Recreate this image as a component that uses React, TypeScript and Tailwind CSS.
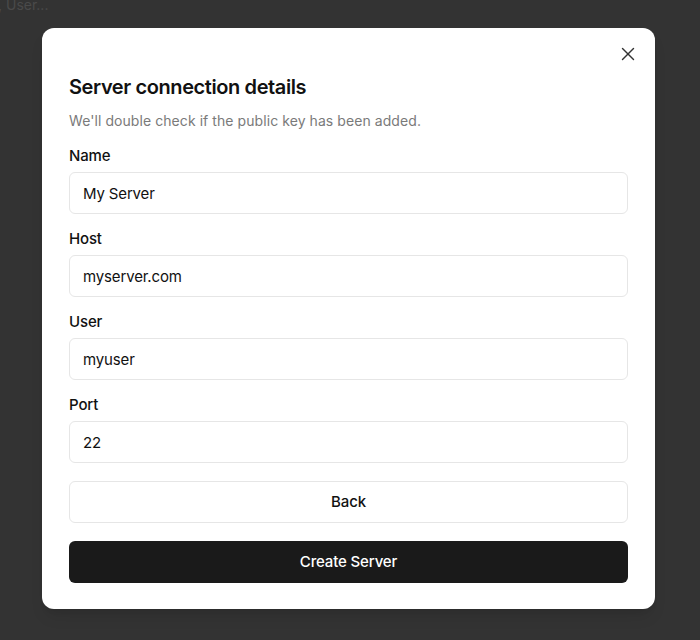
import { X } from "lucide-react";

const fields = [
  { label: "Name", value: "My Server" },
  { label: "Host", value: "myserver.com" },
  { label: "User", value: "myuser" },
  { label: "Port", value: "22" },
];

export default function App() {
  return (
    <div
      className="relative h-[640px] w-full overflow-hidden bg-[#333333] pl-[42px] pt-[28px]"
      style={{ fontFamily: "Inter, 'Noto Sans', sans-serif" }}
    >
      <div className="absolute left-[-2px] top-[-6px] text-[14px] text-[#4a4a4a]">, User...</div>

      <div className="relative flex h-[581px] w-[613px] flex-col rounded-[12px] bg-white px-[27px] pt-[45px] shadow-lg">
        <button className="absolute right-[16px] top-[15px] text-[#333]">
          <X size={22} strokeWidth={1.5} />
        </button>

        <h2 className="text-[20px] font-semibold leading-[28px] tracking-[-0.02em] text-[#111]">
          Server connection details
        </h2>
        <p className="mt-[10px] text-[14px] leading-[20px] tracking-[0.005em] text-[#7a7a7a]">
          We'll double check if the public key has been added.
        </p>

        <div className="mt-[15px] flex flex-col gap-[15px]">
          {fields.map((f) => (
            <div key={f.label} className="flex flex-col gap-[6px]">
              <label className="text-[15px] font-medium leading-[20px] tracking-[-0.01em] text-[#111]">
                {f.label}
              </label>
              <input
                readOnly
                value={f.value}
                className="h-[42px] w-full rounded-[6px] border border-[#e6e6e6] px-[13px] text-[15px] tracking-[-0.01em] text-[#111] outline-none"
              />
            </div>
          ))}
        </div>

        <button className="mt-[18px] h-[42px] w-full rounded-[6px] border border-[#e6e6e6] bg-white text-[15px] font-medium tracking-[-0.01em] text-[#111]">
          Back
        </button>
        <button className="mt-[18px] h-[42px] w-full rounded-[6px] bg-[#1a1a1a] text-[15px] font-medium tracking-[-0.01em] text-white">
          Create Server
        </button>
      </div>
    </div>
  );
}
